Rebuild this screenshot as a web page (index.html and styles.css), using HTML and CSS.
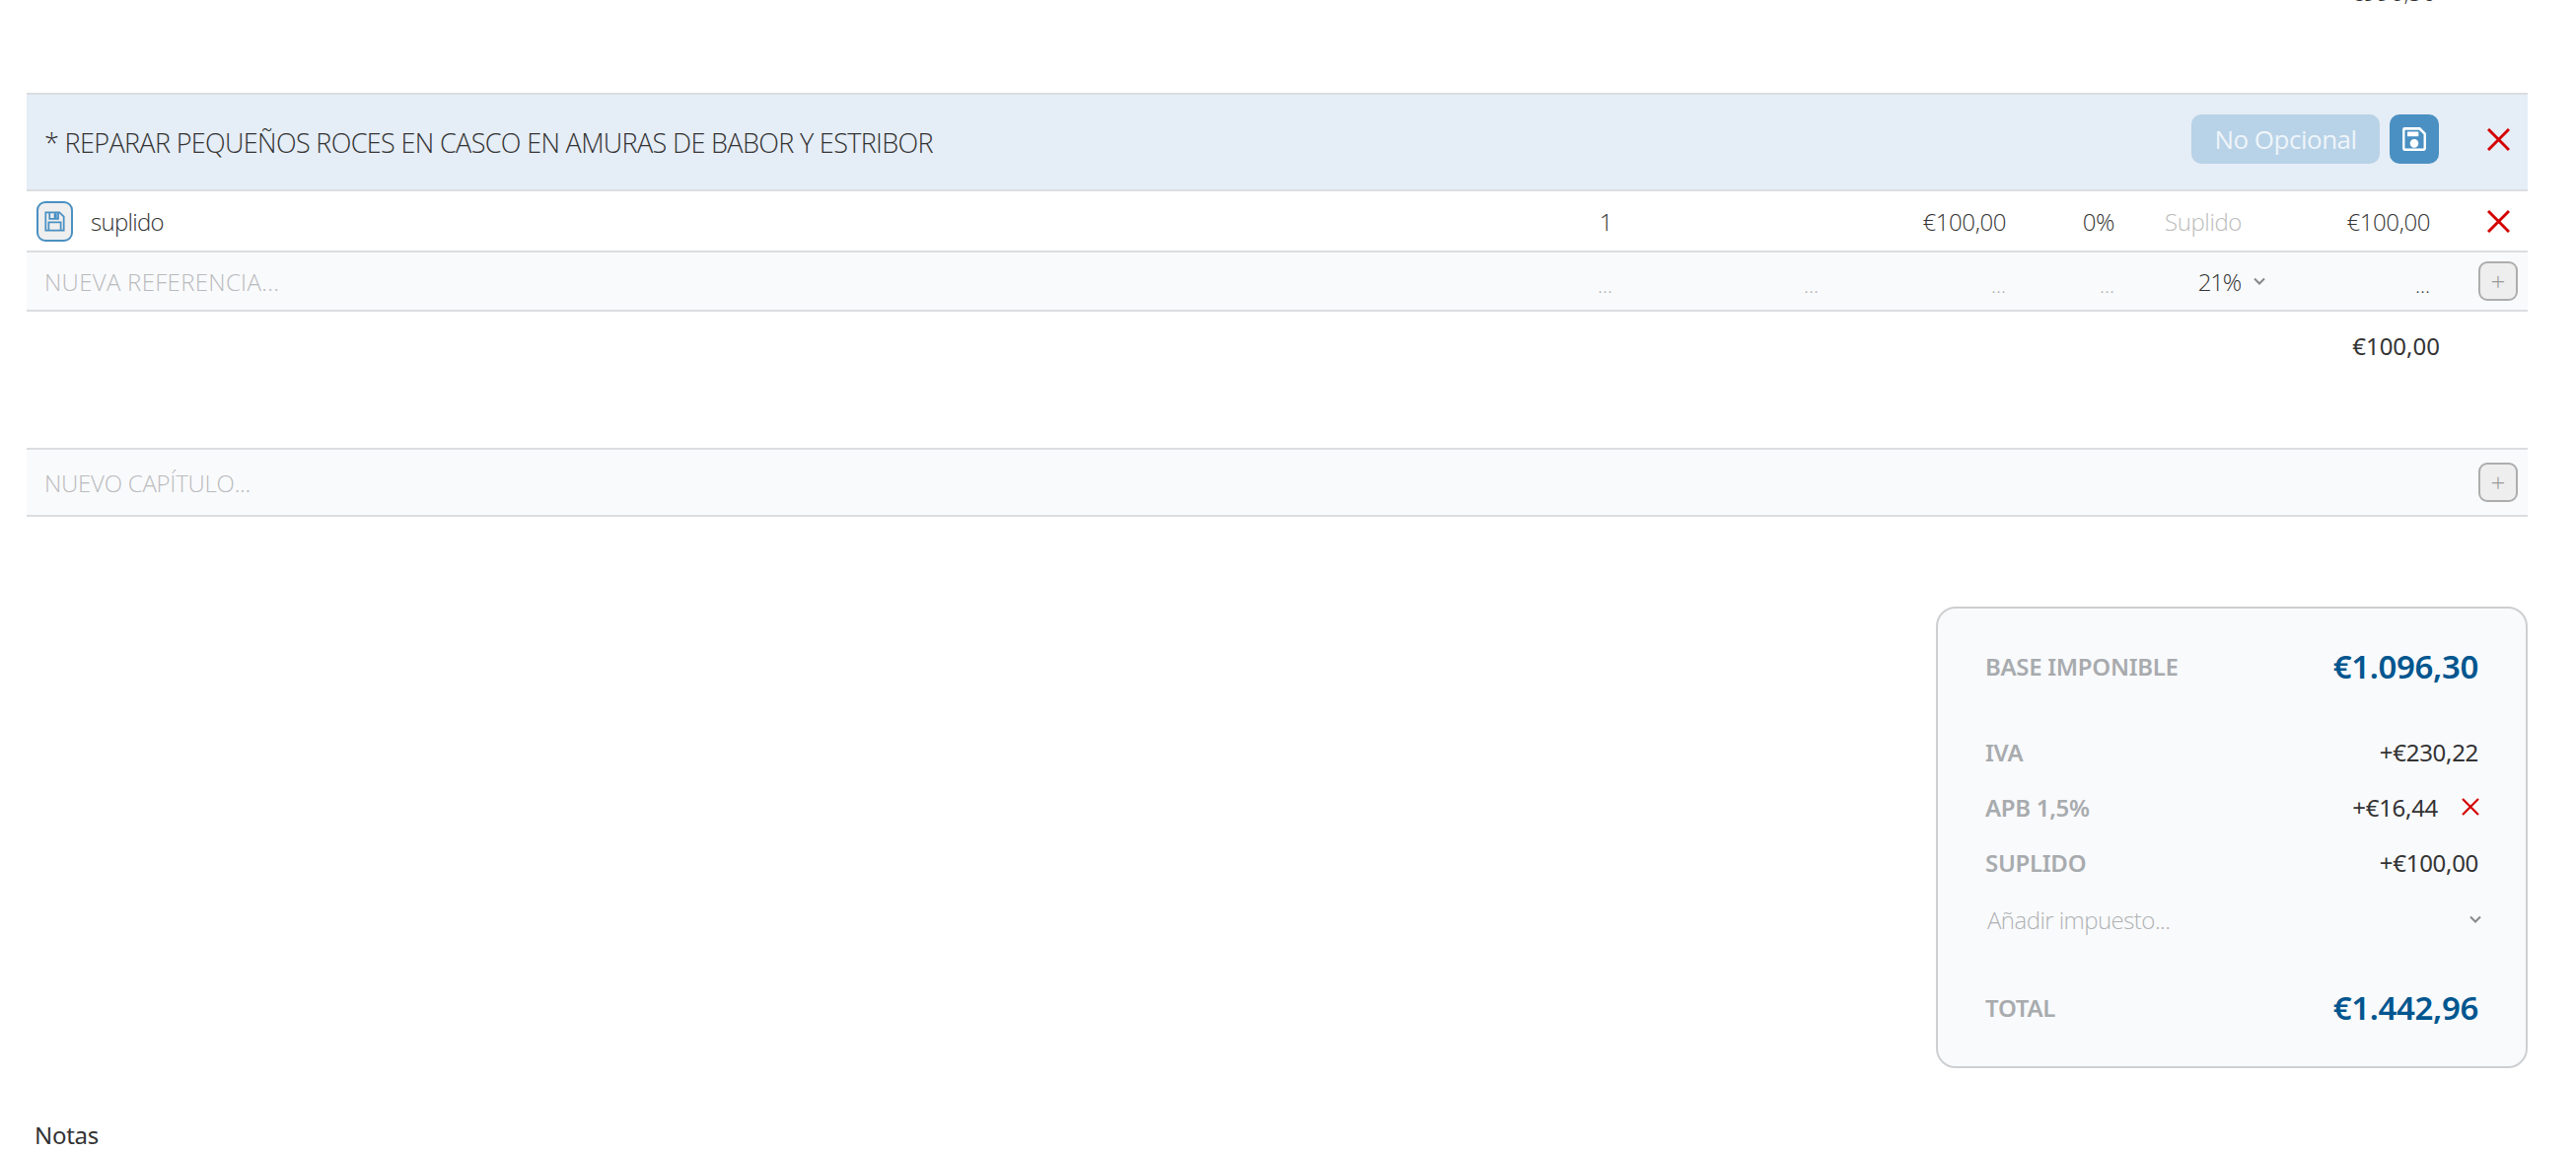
FILE: index.html
```html
<!DOCTYPE html>
<html lang="es">
<head>
<meta charset="utf-8">
<title>Presupuesto</title>
<link rel="stylesheet" href="styles.css">
</head>
<body>
<main class="page">
  <div class="clipped-total"><span>€996,30</span></div>

  <section class="chapter">
    <header class="chapter-head">
      <span class="chapter-title">* REPARAR PEQUEÑOS ROCES EN CASCO EN AMURAS DE BABOR Y ESTRIBOR</span>
      <div class="chapter-actions">
        <button class="btn-optional">No Opcional</button>
        <button class="btn-save" aria-label="Guardar">
          <svg viewBox="0 0 24 24" width="26" height="26"><path class="floppy-solid" fill-rule="evenodd" d="M3 1h14.500L23 6.500V21a2 2 0 0 1-2 2H3a2 2 0 0 1-2-2V3a2 2 0 0 1 2-2Zm1 2.500a.8.800 0 0 0-.8.800V20a.8.800 0 0 0 .8.800h16a.8.800 0 0 0 .8-.800V7.500L16.500 3.500ZM5.500 5H16v4.500H5.500ZM12 12a4 4 0 1 1 0 8 4 4 0 0 1 0-8Z"/></svg>
        </button>
        <button class="btn-x" aria-label="Eliminar">
          <svg viewBox="0 0 23 23" width="23" height="23"><path class="x-stroke" d="M1 1 22 22M22 1 1 22"/></svg>
        </button>
      </div>
    </header>

    <div class="line-row item-row">
      <div class="cell-name">
        <button class="btn-save-outline" aria-label="Guardar">
          <svg viewBox="0 0 24 24" width="21" height="21"><path class="floppy-line" d="M1.500 1.500h16l5 5V22.500h-21ZM6 1.500v7.500h10V1.500M5 22.500v-9.500h14v9.500"/><rect class="floppy-fill" x="11" y="2.500" width="3.500" height="5.500"/></svg>
        </button>
        <span>suplido</span>
      </div>
      <div class="cell-num">1</div>
      <div class="cell-num"></div>
      <div class="cell-num">€100,00</div>
      <div class="cell-num">0%</div>
      <div class="cell-tax muted">Suplido</div>
      <div class="cell-num">€100,00</div>
      <div class="cell-action">
        <button class="btn-x" aria-label="Eliminar">
          <svg viewBox="0 0 23 23" width="23" height="23"><path class="x-stroke" d="M1 1 22 22M22 1 1 22"/></svg>
        </button>
      </div>
    </div>

    <div class="line-row new-row">
      <div class="placeholder ref-placeholder">NUEVA REFERENCIA...</div>
      <div class="cell-num dots">...</div>
      <div class="cell-num dots">...</div>
      <div class="cell-num dots">...</div>
      <div class="cell-num dots">...</div>
      <div class="cell-select">
        <span>21%</span>
        <svg class="chevron" viewBox="0 0 12 8" width="12" height="8"><path d="M1 1.500 6 6.500 11 1.500"/></svg>
      </div>
      <div class="cell-num dots dark">...</div>
      <div class="cell-action"><button class="btn-plus" aria-label="Añadir">+</button></div>
    </div>

    <div class="chapter-total">€100,00</div>
  </section>

  <div class="new-chapter">
    <span class="placeholder">NUEVO CAPÍTULO...</span>
    <button class="btn-plus" aria-label="Añadir">+</button>
  </div>

  <div class="summary-wrap">
    <aside class="summary">
      <div class="sum-row sum-main base">
        <span class="sum-label">BASE IMPONIBLE</span>
        <span class="sum-big">€1.096,30</span>
      </div>
      <div class="sum-row">
        <span class="sum-label">IVA</span>
        <span class="sum-value">+€230,22</span>
      </div>
      <div class="sum-row">
        <span class="sum-label">APB 1,5%</span>
        <span class="sum-value with-x">+€16,44
          <svg viewBox="0 0 18 18" width="18" height="18"><path class="x-thin" d="M1 1 17 17M17 1 1 17"/></svg>
        </span>
      </div>
      <div class="sum-row">
        <span class="sum-label">SUPLIDO</span>
        <span class="sum-value">+€100,00</span>
      </div>
      <div class="sum-row sum-add">
        <span>Añadir impuesto...</span>
        <svg class="chevron" viewBox="0 0 12 8" width="12" height="8"><path d="M1 1.500 6 6.500 11 1.500"/></svg>
      </div>
      <div class="sum-row sum-main total">
        <span class="sum-label">TOTAL</span>
        <span class="sum-big">€1.442,96</span>
      </div>
    </aside>
  </div>

  <h2 class="notes-title">Notas</h2>
</main>
</body>
</html>
```

FILE: styles.css
```css
* { box-sizing: border-box; }
html, body { margin: 0; padding: 0; background: #fff; }
body {
  font-family: "Open Sans", "Noto Sans", sans-serif;
  color: #333;
  overflow: hidden;
  height: 1168px;
}
button { font-family: inherit; cursor: pointer; padding: 0; }
.page { padding: 0 49px 0 27px; }

.clipped-total {
  height: 94px;
  overflow: hidden;
  text-align: right;
  padding-right: 93px;
}
.clipped-total span {
  display: block;
  margin-top: -25px;
  line-height: 34px;
  font-size: 24px;
  font-weight: 300;
}

.chapter-head {
  display: flex;
  align-items: center;
  justify-content: space-between;
  height: 100px;
  background: #e5edf6;
  border-top: 2px solid #dcdde0;
  border-bottom: 2px solid #dcdde0;
  padding: 0 18px;
}
.chapter-title { font-size: 27px; font-weight: 300; letter-spacing: -0.65px; }
.chapter-actions { display: flex; align-items: center; margin-top: -6px; }
.btn-optional {
  width: 191px;
  height: 50px;
  border: 0;
  border-radius: 10px;
  background: #b8d2e7;
  color: #eef5fa;
  font-size: 26px;
  font-weight: 400;
  letter-spacing: -0.5px;
}
.btn-save {
  display: flex;
  align-items: center;
  justify-content: center;
  width: 50px;
  height: 50px;
  margin-left: 10px;
  border: 0;
  border-radius: 10px;
  background: #4a90c2;
}
.floppy-solid { fill: #fff; }
.btn-x {
  display: flex;
  width: 23px;
  height: 23px;
  border: 0;
  background: none;
}
.chapter-actions .btn-x { margin: 0 0 0 49px; }
.x-stroke { fill: none; stroke: #d40000; stroke-width: 3; }
.x-thin { fill: none; stroke: #d40000; stroke-width: 2.200; }

.line-row {
  display: grid;
  grid-template-columns: 1fr 200px 209px 190px 110px 153px 167px 99px;
  align-items: center;
  border-bottom: 2px solid #dcdde0;
  font-size: 24px;
  font-weight: 300;
  letter-spacing: -0.4px;
}
.item-row { height: 62px; }
.new-row { height: 60px; background: #f9fafc; }
.cell-name { display: flex; align-items: center; padding-left: 10px; }
.cell-name span { margin-left: 18px; letter-spacing: -0.7px; }
.btn-save-outline {
  display: flex;
  align-items: center;
  justify-content: center;
  width: 37px;
  height: 41px;
  border: 2px solid #4a90c2;
  border-radius: 9px;
  background: #efefef;
}
.floppy-line { fill: none; stroke: #4a90c2; stroke-width: 2; }
.floppy-fill { fill: #4a90c2; }
.cell-num { text-align: right; color: #333; }
.cell-tax { text-align: right; padding-right: 24px; }
.muted { color: #bbb; }
.placeholder { color: #b9babc; font-size: 24px; font-weight: 300; padding-left: 18px; letter-spacing: -0.25px; }
.ref-placeholder { letter-spacing: 0.3px; }
.dots { color: #aaa; font-size: 21px; padding-top: 8px; letter-spacing: 0; }
.dots.dark { color: #333; }
.cell-select { display: flex; align-items: center; justify-content: flex-end; }
.cell-select span { letter-spacing: -1.2px; }
.chevron { fill: none; stroke: #888; stroke-width: 2; }
.cell-select .chevron { margin-left: 13px; }
.cell-action { display: flex; justify-content: flex-end; padding-right: 18px; }
.btn-plus {
  width: 40px;
  height: 40px;
  border: 2px solid #adadad;
  border-radius: 9px;
  background: #eee;
  color: #999;
  font-size: 26px;
  font-weight: 300;
  line-height: 1;
}
.new-row .cell-action { padding-right: 10px; }

.chapter-total {
  height: 138px;
  padding: 17px 89px 0 0;
  text-align: right;
  font-family: "Noto Sans", sans-serif;
  font-size: 24px;
  font-weight: 400;
  line-height: 36px;
  letter-spacing: 0;
}

.new-chapter {
  display: flex;
  align-items: center;
  justify-content: space-between;
  height: 70px;
  background: #f9fafc;
  border-top: 2px solid #dcdde0;
  border-bottom: 2px solid #dcdde0;
  padding-right: 10px;
}

.summary-wrap { display: flex; justify-content: flex-end; margin-top: 91px; }
.summary {
  width: 600px;
  height: 468px;
  padding: 32px 48px 0 48px;
  background: #f9fafc;
  border: 2px solid #cdcfd1;
  border-radius: 20px;
}
.sum-row { display: flex; align-items: center; justify-content: space-between; height: 56px; }
.sum-main { height: 52px; }
.base { margin-bottom: 33px; }
.total { margin-top: 33px; }
.sum-label { font-family: "Noto Sans", sans-serif; font-size: 24px; font-weight: 600; color: #a8abae; letter-spacing: -0.3px; }
.sum-big { font-family: "Noto Sans", sans-serif; font-size: 33px; font-weight: 600; color: #00568f; letter-spacing: -0.35px; }
.sum-value { font-family: "Noto Sans", sans-serif; font-size: 24px; font-weight: 400; color: #333; letter-spacing: -0.3px; }
.with-x { display: flex; align-items: center; margin-right: -1px; }
.with-x svg { margin-left: 24px; }
.sum-add {
  height: 60px;
  padding: 0 0 0 2px;
  color: #b0b2b4;
  font-size: 24px;
  font-weight: 300;
  letter-spacing: -0.55px;
  margin-right: -3px;
}

.notes-title {
  margin: 50px 0 0 8px;
  font-family: "Noto Sans", sans-serif;
  font-size: 24px;
  font-weight: 400;
  line-height: 36px;
  letter-spacing: -0.3px;
}
```
